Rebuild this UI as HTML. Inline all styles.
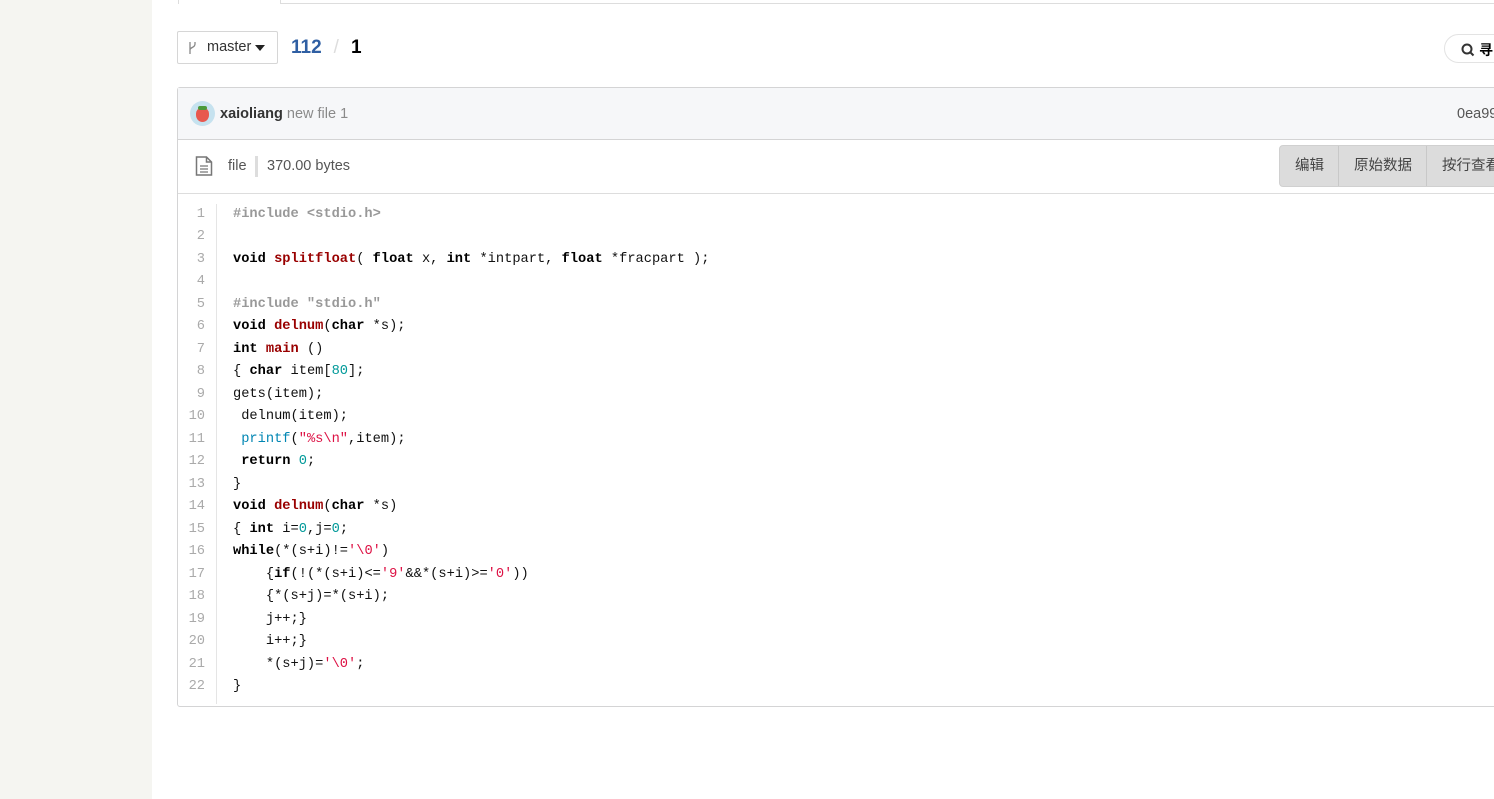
<!DOCTYPE html>
<html><head><meta charset="utf-8"><style>
*{box-sizing:border-box;margin:0;padding:0}
body{width:1494px;height:799px;overflow:hidden;background:#fff;font-family:"Liberation Sans","Noto Sans CJK SC",sans-serif;position:relative}
.side{position:absolute;left:0;top:0;width:152px;height:799px;background:#f5f5f1}
.tabline{position:absolute;left:280px;top:3px;width:1214px;height:1px;background:#ddd}
.tabl{position:absolute;left:178px;top:0;width:1px;height:4px;background:#ddd}
.tabr{position:absolute;left:280px;top:0;width:1px;height:4px;background:#ddd}
.branch{position:absolute;left:177px;top:31px;width:101px;height:33px;border:1px solid #d6d6d6;border-radius:2px;font-size:14.5px;color:#333}
.branch .t{position:absolute;left:29px;top:7px}
.crumb{position:absolute;left:291px;top:37px;font-size:19px;font-weight:bold}
.search{position:absolute;left:1444px;top:34px;width:80px;height:29px;border:1px solid #e3e3e3;border-radius:15px}
.box{position:absolute;left:177px;top:87px;width:1330px;height:620px;border:1px solid #d4d4d5;border-radius:3px}
.hd{height:52px;background:#f6f7f9;border-bottom:1px solid #d4d4d5;position:relative}
.av{position:absolute;left:12px;top:13px;width:25px;height:25px;border-radius:50%;background:#c6e2ef}
.hd .n{position:absolute;left:42px;top:18px;font-size:14.5px}
.hash{position:absolute;left:1279px;top:18px;font-size:14.5px;color:#555}
.fh{height:54px;border-bottom:1px solid #ddd;position:relative;font-size:14.5px;color:#555}
.btns{position:absolute;left:1101px;top:5px;width:300px;height:42px;background:#dcdcdc;border:1px solid #d0d0d0;border-radius:4px;display:flex;font-size:14.5px;color:#444;white-space:nowrap}
.btns div{flex-shrink:0;padding:0 14px 0 15px;line-height:40px;border-right:1px solid #c8c8c8}
.code{position:relative;font-family:"Liberation Mono",monospace;font-size:13.7px;line-height:22.48px;font-weight:normal}
.ln{position:absolute;left:0;top:10px;width:39px;border-right:1px solid #e5e5e5;text-align:right;padding-right:11px;color:#aaa;height:500px}
.src{position:absolute;left:55px;top:10px;white-space:pre;color:#111}
b{font-weight:bold;color:#000}.f{font-weight:bold;color:#900}.p{color:#999;font-weight:bold}.s{color:#d14}.nm{color:#099}.bi{color:#0086b3}
</style></head><body>
<div class="side"></div>
<div class="tabl"></div><div class="tabr"></div><div class="tabline"></div>
<div class="branch"><svg style="position:absolute;left:9px;top:9px" width="10" height="14" viewBox="0 0 10 14"><path d="M3 1v12M3 9c0-3 5-2 5-6M8 1v2" stroke="#888" fill="none" stroke-width="1.3"/></svg><span class="t">master</span><svg style="position:absolute;left:77px;top:13px" width="10" height="6" viewBox="0 0 10 6"><path d="M0 0h10L5 6z" fill="#222"/></svg></div>
<div class="crumb"><span style="color:#2f5fa3">112</span><span style="color:#ddd;font-weight:normal;margin:0 12px">/</span><span>1</span></div>
<div class="search"><svg style="position:absolute;left:16px;top:8px" width="14" height="14" viewBox="0 0 14 14"><circle cx="6" cy="6" r="4.5" stroke="#333" stroke-width="2" fill="none"/><path d="M9.5 9.5l3 3" stroke="#333" stroke-width="2"/></svg><span style="position:absolute;left:34px;top:5px;font-size:14px;font-weight:bold">寻</span></div>
<div class="box">
<div class="hd"><div class="av"><div style="position:absolute;left:6px;top:7px;width:13px;height:14px;background:#e8584f;border-radius:40% 40% 50% 50%"></div><div style="position:absolute;left:8px;top:5px;width:9px;height:4px;background:#4a9a3a;border-radius:2px"></div></div><div class="n"><b style="color:#333">xaioliang</b> <span style="color:#8a8a8a">new file 1</span></div><div class="hash">0ea99</div></div>
<div class="fh"><svg style="position:absolute;left:17px;top:16px" width="18" height="20" viewBox="0 0 18 20"><path d="M1.5 1h10l5 5v13h-15z M11.5 1v5h5" stroke="#777" stroke-width="1.5" fill="none"/><path d="M5 10h8M5 13h8M5 16h8" stroke="#777" stroke-width="1.3"/></svg><span style="position:absolute;left:50px;top:18px">file</span><span style="position:absolute;left:77px;top:16px;width:3px;height:21px;background:#ddd"></span><span style="position:absolute;left:89px;top:18px">370.00 bytes</span>
<div class="btns"><div>编辑</div><div>原始数据</div><div style="border:none">按行查看</div></div></div>
<div class="code"><div class="ln">1<br>2<br>3<br>4<br>5<br>6<br>7<br>8<br>9<br>10<br>11<br>12<br>13<br>14<br>15<br>16<br>17<br>18<br>19<br>20<br>21<br>22</div>
<div class="src"><span class="p">#include &lt;stdio.h&gt;</span>

<b>void</b> <span class="f">splitfloat</span>( <b>float</b> x, <b>int</b> *intpart, <b>float</b> *fracpart );

<span class="p">#include "stdio.h"</span>
<b>void</b> <span class="f">delnum</span>(<b>char</b> *s);
<b>int</b> <span class="f">main</span> ()
{ <b>char</b> item[<span class="nm">80</span>];
gets(item);
 delnum(item);
 <span class="bi">printf</span>(<span class="s">"%s\n"</span>,item);
 <b>return</b> <span class="nm">0</span>;
}
<b>void</b> <span class="f">delnum</span>(<b>char</b> *s)
{ <b>int</b> i=<span class="nm">0</span>,j=<span class="nm">0</span>;
<b>while</b>(*(s+i)!=<span class="s">'\0'</span>)
    {<b>if</b>(!(*(s+i)&lt;=<span class="s">'9'</span>&amp;&amp;*(s+i)&gt;=<span class="s">'0'</span>))
    {*(s+j)=*(s+i);
    j++;}
    i++;}
    *(s+j)=<span class="s">'\0'</span>;
}</div></div>
</div>
</body></html>
